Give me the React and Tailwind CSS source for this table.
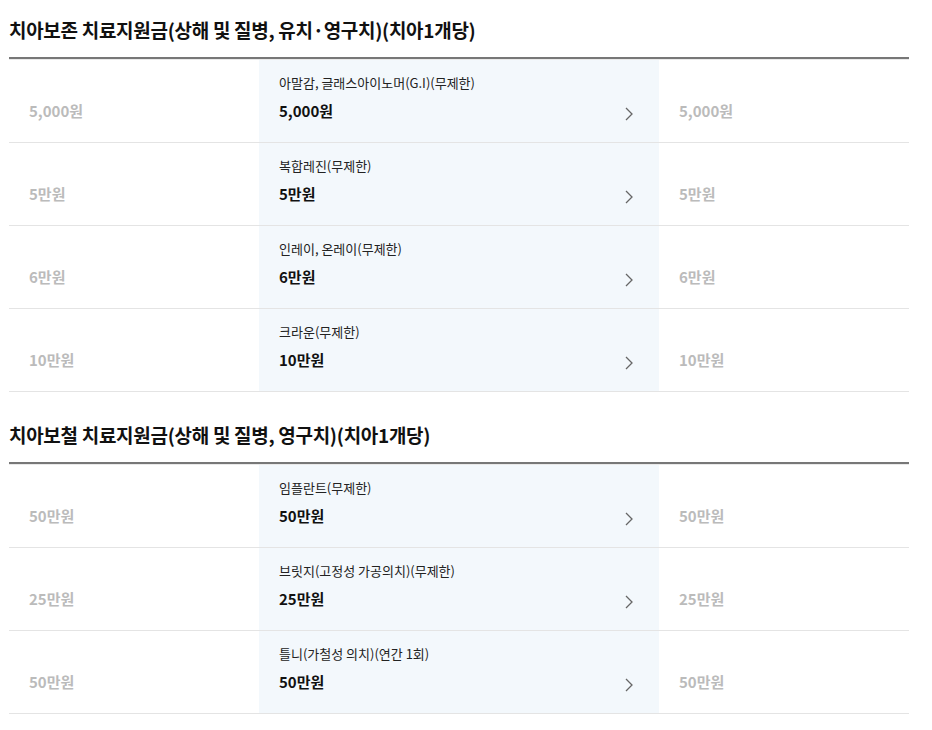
import React from 'react';

const sections = [
  {
    title: '치아보존 치료지원금(상해 및 질병, 유치·영구치)(치아1개당)',
    rows: [
      { label: '아말감, 글래스아이노머(G.I)(무제한)', value: '5,000원' },
      { label: '복합레진(무제한)', value: '5만원' },
      { label: '인레이, 온레이(무제한)', value: '6만원' },
      { label: '크라운(무제한)', value: '10만원' },
    ],
  },
  {
    title: '치아보철 치료지원금(상해 및 질병, 영구치)(치아1개당)',
    rows: [
      { label: '임플란트(무제한)', value: '50만원' },
      { label: '브릿지(고정성 가공의치)(무제한)', value: '25만원' },
      { label: '틀니(가철성 의치)(연간 1회)', value: '50만원' },
    ],
  },
];

function Chevron() {
  return (
    <svg width="8" height="14" viewBox="0 0 8 14" fill="none" className="shrink-0">
      <path d="M1 1l6 6-6 6" stroke="#666" strokeWidth="1.3" />
    </svg>
  );
}

function Row({ label, value }) {
  return (
    <div className="grid grid-cols-[250px_400px_250px] h-[83px] border-b border-[#e4e4e4]">
      <div className="flex items-end pl-5 pb-[20px] text-[15px] leading-[22px] font-bold text-[#bbb]">{value}</div>
      <div className="bg-[#f3f8fc] pl-5 pr-[26px] pt-[13px] flex flex-col">
        <div className="text-[13px] leading-[20px] text-[#222]">{label}</div>
        <div className="flex items-center justify-between mt-[7px]">
          <span className="text-[15px] leading-[22px] font-bold text-[#111]">{value}</span>
          <span className="mt-[5px]"><Chevron /></span>
        </div>
      </div>
      <div className="flex items-end pl-5 pb-[20px] text-[15px] leading-[22px] font-bold text-[#bbb]">{value}</div>
    </div>
  );
}

export default function App() {
  return (
    <div className="bg-white min-h-[730px] pl-[9px]" style={{ fontFamily: '"Noto Sans CJK KR", "Noto Sans", sans-serif' }}>
      <div className="w-[900px]">
        {sections.map((s, i) => (
          <section key={i} className={i === 0 ? 'pt-[17px]' : 'pt-[30px]'}>
            <h2 className="text-[19px] leading-[26px] font-bold text-[#111] tracking-[-0.3px] pb-[14px] border-b-2 border-[#777]">{s.title}</h2>
            <div className="border-t border-[#e9e9e9]">
              {s.rows.map((r, j) => (
                <Row key={j} {...r} />
              ))}
            </div>
          </section>
        ))}
      </div>
    </div>
  );
}
